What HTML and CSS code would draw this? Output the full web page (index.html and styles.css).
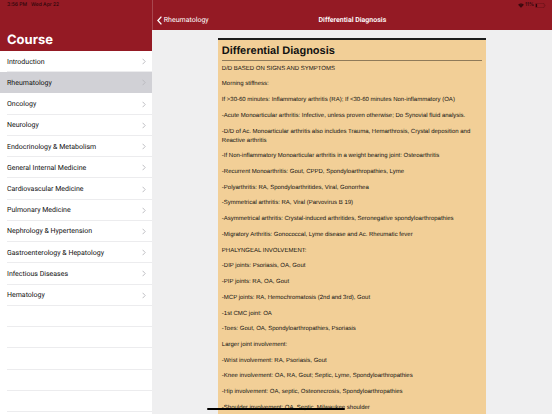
FILE: index.html
```html
<!DOCTYPE html>
<html lang="en">
<head>
  <meta charset="UTF-8" />
  <meta name="viewport" content="width=device-width, initial-scale=1.0" />
  <title>Differential Diagnosis</title>
  <link rel="stylesheet" href="styles.css">
</head>
<body>
  <svg width="0" height="0" class="defs" aria-hidden="true">
    <symbol id="chevron" viewBox="0 0 4 7">
      <path d="M0.6 0.8 L3.2 3.5 L0.6 6.2" fill="none" stroke="#b9b9bd" stroke-width="0.9" />
    </symbol>
  </svg>

  <aside class="sidebar">
    <header class="sidebar-header">
      <div class="status"><span>3:56 PM</span><span>Wed Apr 22</span></div>
      <h1>Course</h1>
    </header>
    <ul class="course-list">
      <li><a href="#">Introduction <svg class="chevron"><use href="#chevron" /></svg></a></li>
      <li class="selected"><a href="#">Rheumatology <svg class="chevron"><use href="#chevron" /></svg></a></li>
      <li><a href="#">Oncology <svg class="chevron"><use href="#chevron" /></svg></a></li>
      <li><a href="#">Neurology <svg class="chevron"><use href="#chevron" /></svg></a></li>
      <li><a href="#">Endocrinology &amp; Metabolism <svg class="chevron"><use href="#chevron" /></svg></a></li>
      <li><a href="#">General Internal Medicine <svg class="chevron"><use href="#chevron" /></svg></a></li>
      <li><a href="#">Cardiovascular Medicine <svg class="chevron"><use href="#chevron" /></svg></a></li>
      <li><a href="#">Pulmonary Medicine <svg class="chevron"><use href="#chevron" /></svg></a></li>
      <li><a href="#">Nephrology &amp; Hypertension <svg class="chevron"><use href="#chevron" /></svg></a></li>
      <li><a href="#">Gastroenterology &amp; Hepatology <svg class="chevron"><use href="#chevron" /></svg></a></li>
      <li><a href="#">Infectious Diseases <svg class="chevron"><use href="#chevron" /></svg></a></li>
      <li><a href="#">Hematology <svg class="chevron"><use href="#chevron" /></svg></a></li>
      <li></li>
      <li></li>
      <li></li>
      <li></li>
      <li></li>
    </ul>
  </aside>

  <main class="detail">
    <header class="detail-header">
      <div class="status status-right">
        <svg class="wifi" viewBox="0 0 12 9" aria-hidden="true">
          <path d="M6 9 L0.3 2.8 Q6 -2 11.7 2.8 Z" fill="currentColor" />
          <path d="M1.6 4.2 Q6 0.6 10.4 4.2 M3.4 6.2 Q6 4 8.6 6.2" fill="none" stroke="#941a24" stroke-width="0.6" />
        </svg>
        <span>11%</span>
        <svg class="battery" viewBox="0 0 22 10" aria-hidden="true">
          <rect x="0.7" y="0.7" width="18" height="8.6" rx="2.4" fill="none" stroke="currentColor" stroke-width="0.9" opacity="0.6" />
          <rect x="1.8" y="1.8" width="2.4" height="6.4" rx="0.8" fill="currentColor" />
          <path d="M20 3.4 Q21.4 5 20 6.6 Z" fill="currentColor" opacity="0.6" />
        </svg>
      </div>
      <nav class="navbar">
        <a class="back" href="#">
          <svg viewBox="0 0 5 9" aria-hidden="true"><path d="M4.4 0.6 L0.9 4.5 L4.4 8.4" fill="none" stroke="#fff" stroke-width="1.3" /></svg>
          Rheumatology
        </a>
        <span class="nav-title">Differential Diagnosis</span>
      </nav>
    </header>

    <article class="note">
      <h2>Differential Diagnosis</h2>
      <p>D/D BASED ON SIGNS AND SYMPTOMS</p>
      <p>Morning stiffness:</p>
      <p>If &gt;30-60 minutes: Inflammatory arthritis (RA); If &lt;30-60 minutes Non-inflammatory (OA)</p>
      <p>-Acute Monoarticular arthritis: Infective, unless proven otherwise; Do Synovial fluid analysis.</p>
      <p>-D/D of Ac. Monoarticular arthritis also includes Trauma, Hemarthrosis, Crystal deposition and Reactive arthritis</p>
      <p>-If Non-inflammatory Monoarticular arthritis in a weight bearing joint: Osteoarthritis</p>
      <p>-Recurrent Monoarthritis: Gout, CPPD, Spondyloarthropathies, Lyme</p>
      <p>-Polyarthritis: RA, Spondyloarthritides, Viral, Gonorrhea</p>
      <p>-Symmetrical arthritis: RA, Viral (Parvovirus B 19)</p>
      <p>-Asymmetrical arthritis: Crystal-induced arthritides, Seronegative spondyloarthropathies</p>
      <p>-Migratory Arthritis: Gonococcal, Lyme disease and Ac. Rheumatic fever</p>
      <p>PHALYNGEAL INVOLVEMENT:</p>
      <p>-DIP joints: Psoriasis, OA, Gout</p>
      <p>-PIP joints: RA, OA, Gout</p>
      <p>-MCP joints: RA, Hemochromatosis (2nd and 3rd), Gout</p>
      <p>-1st CMC joint: OA</p>
      <p>-Toes: Gout, OA, Spondyloarthropathies, Psoriasis</p>
      <p>Larger joint involvement:</p>
      <p>-Wrist involvement: RA, Psoriasis, Gout</p>
      <p>-Knee involvement: OA, RA, Gout; Septic, Lyme, Spondyloarthropathies</p>
      <p>-Hip involvement: OA, septic, Osteonecrosis, Spondyloarthropathies</p>
      <p>-Shoulder involvement: OA, Septic, Milwaukee shoulder</p>
    </article>
  </main>

  <div class="home-indicator"></div>
</body>
</html>
```

FILE: styles.css
```css
* {
  box-sizing: border-box;
}

body {
  display: flex;
  min-height: 100vh;
  margin: 0;
  font-family: Roboto, "Liberation Sans", sans-serif;
  text-rendering: geometricPrecision;
  background-color: #efeff0;
  color: #111;
}

h1, h2, p, ul {
  margin: 0;
  padding: 0;
}

a {
  color: inherit;
  text-decoration: none;
}

.defs {
  position: absolute;
}

.status {
  display: flex;
  gap: 4px;
  font-family: Inter, sans-serif;
  font-size: 5px;
  font-weight: 500;
  line-height: 6px;
  color: #2b060a;
}

.status-right {
  align-items: center;
  justify-content: flex-end;
  gap: 1px;
  padding-right: 6px;
}

/* left column */
.sidebar {
  display: flex;
  flex-direction: column;
  width: 27.5%;
  background-color: #fff;
}

.sidebar-header {
  padding: 2px 7px 3px;
  background-color: #941a24;
}

.sidebar-header h1 {
  margin-top: 24px;
  font-family: Inter, sans-serif;
  font-size: 13px;
  line-height: 16px;
  color: #fff;
}

.course-list {
  display: flex;
  flex: 1;
  flex-direction: column;
  padding-bottom: 2px;
  list-style: none;
}

.course-list li {
  flex: 1 0 21px;
  display: flex;
  padding-left: 7px;
  background: linear-gradient(#ececee, #ececee) 7px 100% / 100% 1px no-repeat;
}

.course-list .selected {
  background: #d1d1d6;
}

.course-list a {
  display: flex;
  align-items: center;
  justify-content: space-between;
  width: 100%;
  padding-right: 6px;
  font-size: 7px;
  line-height: 10px;
}

.chevron {
  width: 4px;
  height: 7px;
}

/* right column */
.detail {
  display: flex;
  flex: 1;
  flex-direction: column;
}

.detail-header {
  padding: 2px 0 5px;
  border-left: 1px solid #a8474f;
  background-color: #941a24;
}

.navbar {
  display: grid;
  grid-template-columns: 1fr auto 1fr;
  align-items: center;
  margin-top: 7px;
  padding: 0 4px;
  font-size: 7px;
  line-height: 10px;
  color: #fff;
}

.back {
  display: flex;
  align-items: center;
  gap: 2px;
}

.back svg {
  width: 5px;
  height: 9px;
}

.nav-title {
  font-weight: 600;
}

.wifi {
  width: 6px;
  height: 5px;
}

.battery {
  width: 11px;
  height: 5px;
}

.note {
  display: flex;
  flex: 1;
  flex-direction: column;
  justify-content: space-between;
  gap: 6px;
  margin: 8px 66px 0;
  padding: 4px 4px 1px;
  border-top: 2px solid #1c1c1c;
  background-color: #f2cf97;
  font-family: "Liberation Sans", Arial, sans-serif;
  font-size: 6px;
  line-height: 9px;
}

.note h2 {
  margin-bottom: -3px;
  padding-bottom: 2px;
  border-bottom: 1px solid #8f7a59;
  font-size: 11px;
  line-height: 14px;
}

.home-indicator {
  position: fixed;
  bottom: 4px;
  left: 50%;
  width: 25%;
  height: 2px;
  border-radius: 1px;
  background-color: #000;
  transform: translateX(-50%);
}
```
